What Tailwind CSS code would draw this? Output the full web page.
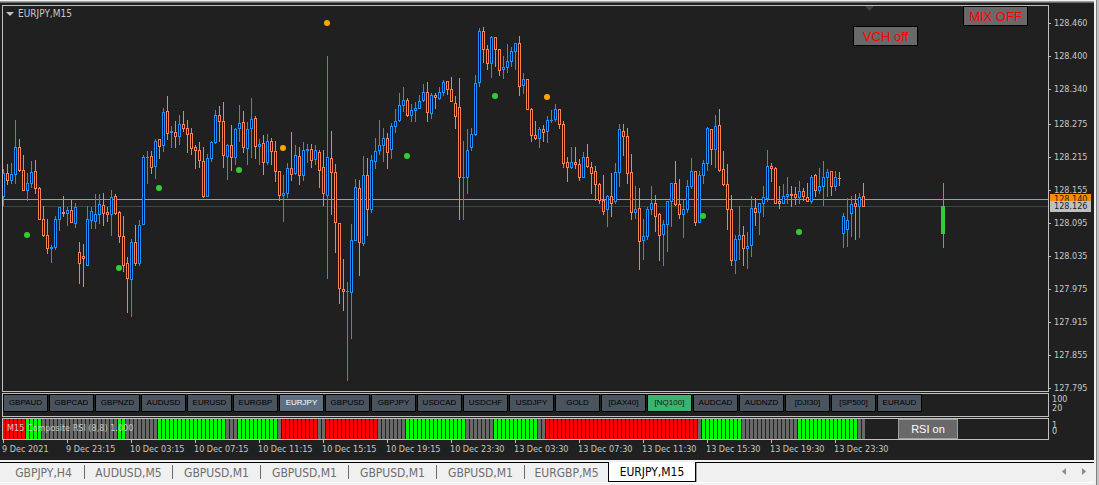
<!DOCTYPE html>
<html lang="en">
<head>
  <meta charset="UTF-8" />
  <meta name="viewport" content="width=device-width, initial-scale=1.0" />
  <title>EURJPY,M15</title>
  <script src="https://cdn.jsdelivr.net/npm/@tailwindcss/browser@4"></script>
</head>
<body class="bg-[#f0f0f0] font-['DejaVu_Sans_Condensed','DejaVu_Sans',sans-serif]">
  <div class="flex min-h-screen">
    <div class="flex-1 min-w-0 flex flex-col">
      <div class="h-px bg-[#f0f0f0]"></div>
      <div class="h-px bg-[#a0a0a0]"></div>
      <div class="h-px bg-[#696969]"></div>

      <main class="flex bg-[#202020] text-[#c8c8c8] text-[9px] pt-[2px] pl-[2px] pb-[5px] overflow-hidden">
        <div class="flex-1 min-w-0">
          <!-- price chart -->
          <section class="relative border border-[#c0c0c0] mb-px">
            <svg id="chart" class="block w-full h-[385px]" shape-rendering="crispEdges"></svg>
            <h1 class="absolute left-[3px] top-[2px] flex items-center gap-1 text-[10px] leading-3">
              <svg class="w-2 h-1" viewBox="0 0 8 4"><path d="M0 0h8L4 4z" fill="#c0c0c0"/></svg>
              EURJPY,M15
            </h1>
            <button class="absolute right-[130px] top-5 w-[65px] h-5 border border-black rounded-[1px] bg-[#696969] text-[#ff0000] text-[13px] leading-none font-['Liberation_Sans',sans-serif]">VCH off</button>
            <button class="absolute right-5 top-0 w-[65px] h-5 border border-black rounded-[1px] bg-[#696969] text-[#ff0000] text-[13px] leading-none font-['Liberation_Sans',sans-serif]">MIX OFF</button>
          </section>

          <!-- symbol switcher -->
          <nav id="symbols" class="flex gap-px border border-[#c0c0c0] h-6 mb-px overflow-hidden font-['Liberation_Sans',sans-serif]"></nav>

          <!-- RSI strip -->
          <section class="relative border border-[#c0c0c0]">
            <svg id="rsi" class="block w-full h-5" shape-rendering="crispEdges"></svg>
            <p class="absolute left-1 top-[3px] leading-3">M15 Composite RSI (8,8) 1.000</p>
            <button class="absolute right-[90px] top-0 w-[60px] h-5 border border-[#a0a0a0] bg-[#696969] text-white text-[11px] leading-none font-['Liberation_Sans',sans-serif]">RSI on</button>
          </section>

          <ol id="times" class="flex leading-3 overflow-hidden whitespace-nowrap"></ol>
        </div>

        <aside class="relative w-[45px] shrink-0 pt-[13px]">
          <ol id="prices" class="flex flex-col gap-[22px] leading-[11px]"></ol>
          <p class="mt-px pl-[3px] leading-[9px]">100<br>20</p>
          <p class="mt-[9px] pl-[3px] leading-[6px]">1<br>0</p>
          <div class="absolute left-px top-[189px] w-[41px] pl-1 leading-[11px] bg-[#ff8c00] text-[#202020]">128.140</div>
          <div class="absolute left-px top-[196px] w-[41px] pl-1 leading-[11px] bg-[#c0c0c0] text-[#202020]">128.126</div>
        </aside>
      </main>

      <div class="h-[2px] bg-[#f0f0f0]"></div>
      <footer class="flex items-start h-5 border-t border-black text-[12px] leading-[18px] text-[#6d6d6d]">
        <div id="tabs" class="flex min-w-0"></div>
        <div class="ml-auto flex gap-4 mt-[5px] mr-2">
          <button aria-label="Scroll tabs left"><svg class="block w-1 h-[7px]" viewBox="0 0 4 7"><path d="M4 0v7L0 3.5z" fill="#8a8a8a"/></svg></button>
          <button aria-label="Scroll tabs right"><svg class="block w-1 h-[7px]" viewBox="0 0 4 7"><path d="M0 0v7l4-3.5z" fill="#8a8a8a"/></svg></button>
        </div>
      </footer>
      <div class="h-px bg-white"></div>
    </div>
    <div class="w-[5px] shrink-0 flex">
      <div class="w-[2px] bg-[#f0f0f0]"></div>
      <div class="w-px bg-[#808080]"></div>
      <div class="w-[2px] bg-[#c4c4c4]"></div>
    </div>
  </div>

  <script>
    // up, high, body top, body bottom, low
    const candles = [
      [1,169,173,197,206],[0,164,173,181,185],[1,163,174,181,184],[1,120,147,175,184],[0,139,147,171,172],[0,155,170,191,191],
      [1,173,183,191,201],[1,161,172,184,188],[0,160,171,189,194],[0,187,188,220,220],[0,206,219,236,237],[0,219,235,249,254],
      [1,245,247,249,263],[1,216,219,248,250],[1,207,207,220,231],[0,196,212,214,217],[1,207,210,214,226],[0,200,210,223,223],
      [1,203,207,224,228],[0,242,252,264,284],[0,244,256,259,287],[1,206,219,266,266],[1,207,211,221,229],[1,194,214,222,229],
      [1,194,204,215,224],[0,193,205,214,226],[0,207,212,215,222],[1,190,197,215,236],[0,194,196,214,215],[0,211,212,237,243],
      [0,216,236,266,272],[0,257,263,279,313],[1,239,242,280,317],[0,225,242,264,266],[1,220,225,264,266],[1,155,157,225,225],
      [1,151,157,158,184],[0,151,156,168,174],[1,139,141,167,179],[0,139,139,147,159],[1,108,112,146,152],[0,96,111,134,140],
      [1,126,131,133,148],[0,121,132,137,148],[1,115,124,137,145],[0,111,124,129,132],[0,120,128,135,153],[0,128,133,149,155],
      [0,145,147,151,169],[0,142,150,161,168],[0,147,161,197,198],[1,154,158,197,197],[1,141,142,159,162],[1,110,115,143,144],
      [0,106,115,122,142],[0,102,121,156,168],[1,144,145,157,180],[0,125,145,158,171],[1,128,129,158,165],[1,105,123,129,142],
      [0,111,122,148,153],[1,122,129,149,165],[1,98,119,129,158],[0,116,118,147,159],[1,139,144,147,165],[0,135,143,163,175],
      [1,134,141,163,165],[0,138,141,152,165],[0,141,151,172,182],[0,171,171,196,201],[1,175,193,196,222],[1,163,168,194,198],
      [0,132,168,175,181],[1,145,155,174,175],[0,147,156,176,185],[1,142,150,176,181],[1,144,149,151,163],[0,144,149,161,168],
      [1,145,150,160,165],[0,150,152,171,188],[0,150,167,194,206],[1,56,157,196,279],[0,131,158,173,215],[0,164,172,223,253],
      [0,223,223,289,304],[0,259,289,292,311],[1,282,291,292,381],[1,224,240,293,339],[1,179,187,241,241],[0,180,188,243,276],
      [1,156,175,244,246],[0,158,175,210,236],[1,155,160,210,213],[1,138,151,162,169],[1,120,145,151,155],[1,128,138,146,162],
      [0,133,138,153,169],[1,123,126,150,159],[1,109,121,127,133],[1,93,105,121,122],[1,87,100,106,112],[0,98,100,116,117],
      [1,104,110,116,122],[1,102,108,111,122],[1,95,101,109,109],[1,84,92,101,102],[0,82,92,113,122],[1,93,95,114,119],
      [0,93,95,98,109],[1,87,92,99,100],[1,80,82,93,96],[0,81,81,90,95],[0,77,89,102,102],[0,96,103,117,129],
      [0,78,107,178,220],[1,141,177,178,220],[1,129,150,178,194],[1,128,134,148,151],[1,75,83,135,136],[1,28,31,83,87],
      [0,27,31,50,63],[0,45,49,64,70],[1,36,37,64,78],[0,37,37,50,67],[0,49,49,71,76],[1,56,67,70,79],
      [1,44,61,68,73],[1,47,51,62,67],[1,43,43,52,70],[0,36,43,87,96],[1,73,79,86,94],[0,79,79,110,110],
      [0,108,109,136,142],[0,121,135,139,140],[1,127,129,139,148],[0,125,129,133,142],[1,116,120,132,143],[1,110,120,121,123],
      [1,104,109,120,122],[0,109,109,125,129],[0,121,124,164,168],[0,157,162,168,182],[1,147,162,168,169],[0,147,162,165,169],
      [0,159,164,178,181],[1,152,157,178,178],[0,144,157,167,168],[0,162,167,174,194],[0,166,171,185,201],[0,183,184,201,204],
      [0,175,200,212,215],[1,195,196,210,227],[0,173,196,204,217],[1,163,172,202,204],[1,124,129,173,187],[0,124,131,137,156],
      [0,128,136,174,184],[0,154,172,213,220],[1,186,209,213,219],[0,188,208,242,270],[1,219,236,241,260],[1,207,209,237,240],
      [1,186,203,210,215],[0,195,203,217,232],[0,213,214,236,261],[1,220,224,235,266],[1,201,201,225,252],[1,183,183,202,227],
      [0,161,183,205,206],[0,179,204,215,219],[1,200,209,215,238],[1,180,186,210,213],[1,158,171,187,189],[0,171,171,223,226],
      [1,171,175,223,223],[1,160,163,176,184],[1,127,128,164,171],[0,129,129,150,165],[1,115,126,150,168],[0,109,125,171,172],
      [0,151,169,185,186],[0,164,184,210,230],[0,195,209,261,266],[1,235,239,261,274],[1,206,235,240,260],[0,226,235,249,266],
      [1,232,246,249,269],[1,196,208,246,257],[0,198,208,213,226],[1,203,203,213,235],[1,186,197,204,217],[1,150,166,199,202],
      [0,163,166,169,182],[0,167,168,204,204],[0,186,201,204,209],[1,184,196,204,204],[1,177,194,197,204],[0,186,194,196,207],
      [0,187,194,198,205],[1,181,191,198,204],[0,188,191,197,201],[0,183,197,202,202],[1,175,177,202,204],[0,174,175,191,197],
      [1,168,186,191,194],[1,161,177,187,206],[1,169,172,178,197],[0,171,171,187,196],[1,171,177,187,191],[0,172,178,179,186],
      [1,213,216,234,248],[1,198,220,230,247],[1,196,204,214,237],[0,194,203,207,240],[1,193,197,207,238],[0,183,196,207,207]
    ];

    const signals = [
      [27,235,'#32cd32'],[119,268,'#32cd32'],[159,188,'#32cd32'],[239,170,'#32cd32'],[407,156,'#32cd32'],[495,96,'#32cd32'],
      [703,216,'#32cd32'],[799,232,'#32cd32'],[283,148,'#ffa500'],[327,23,'#ffa500'],[547,97,'#ffa500']
    ];

    const rect = (x, y, w, h, fill) => `<rect x="${x}" y="${y}" width="${w}" height="${h}" fill="${fill}"/>`;

    let chart = '';
    candles.forEach(([up, high, top, bottom, low], i) => {
      const color = up ? '#1e90ff' : '#ff7f50';
      const x = 2 + i * 4;
      chart += rect(x + 1, high, 1, low - high, color);
      chart += rect(x, top, 3, bottom - top, color);
      if (bottom - top > 2) chart += rect(x + 1, top + 1, 1, bottom - top - 2, '#000');
    });
    const levels = rect(3, 206, '100%', 1, '#3a4646') + rect(3, 199, '100%', 1, '#ff8c00');
    const dots = signals.map(([x, y, c]) =>
      `<circle cx="${x}" cy="${y}" r="3" fill="${c}" shape-rendering="auto"/>`).join('');
    const projection = rect(943, 183, 1, 65, '#32cd32') + rect(941, 206, 4, 28, '#32cd32');
    const shift = '<path d="M865 6h9l-4.500 5z" fill="#3a4646" shape-rendering="auto"/>';
    document.getElementById('chart').innerHTML =
      `<g transform="translate(-3 -6)">${levels}${chart}${dots}${projection}${shift}</g>`;

    // runs of bars: colour, count
    const runs = [
      ['r',6],['g',4],['n',19],['g',2],['n',8],['g',17],['n',3],['g',10],['n',1],['r',9],['n',2],['r',13],['n',7],
      ['g',15],['n',7],['g',11],['n',2],['r',38],['n',1],['g',10],['n',14],['g',15],['n',2]
    ];
    const colors = { r: '#ff0000', g: '#00ff00', n: '#696969' };
    let bars = '', bar = 0;
    for (const [kind, count] of runs) {
      for (let n = 0; n < count; n++, bar++) bars += rect(bar * 4 - 1, 0, 3, 20, colors[kind]);
    }
    document.getElementById('rsi').innerHTML = bars;

    const symbols = ['GBPAUD','GBPCAD','GBPNZD','AUDUSD','EURUSD','EURGBP','EURJPY','GBPUSD','GBPJPY','USDCAD',
      'USDCHF','USDJPY','GOLD','[DAX40]','[NQ100]','AUDCAD','AUDNZD','[DJI30]','[SP500]','EURAUD'];
    const symbolStyle = {
      EURJPY: 'bg-[#5f6f82] text-white',
      '[NQ100]': 'bg-[#3cb371] text-[#10200f]'
    };
    document.getElementById('symbols').innerHTML = symbols.map(s =>
      `<button class="w-[45px] h-[18px] shrink-0 border border-black rounded-[1px] text-[8px] leading-none ${symbolStyle[s] || 'bg-[#4a545f] text-black'}">${s}</button>`).join('');

    const times = ['9 Dec 2021','9 Dec 23:15','10 Dec 03:15','10 Dec 07:15','10 Dec 11:15','10 Dec 15:15','10 Dec 19:15',
      '10 Dec 23:30','13 Dec 03:30','13 Dec 07:30','13 Dec 11:30','13 Dec 15:30','13 Dec 19:30','13 Dec 23:30'];
    document.getElementById('times').innerHTML = times.map(t =>
      `<li class="w-16 shrink-0"><span class="block w-px h-[3px] ml-px bg-[#c0c0c0]"></span>${t}</li>`).join('');

    const prices = ['128.460','128.400','128.340','128.275','128.215','128.155','128.095','128.035','127.975','127.915','127.855','127.795'];
    document.getElementById('prices').innerHTML = prices.map((p, i) =>
      `<li class="flex items-center gap-[3px] ${i === 3 ? 'mt-[2px]' : ''}"><span class="w-[2px] h-px bg-[#c0c0c0]"></span>${p}</li>`).join('');

    const tabs = ['GBPJPY,H4','AUDUSD,M5','GBPUSD,M1','GBPUSD,M1','GBPUSD,M1','GBPUSD,M1','EURGBP,M5','EURJPY,M15'];
    document.getElementById('tabs').innerHTML = tabs.map((t, i) => {
      if (i === 7) return `<button class="w-[88px] h-5 -mt-px pt-px border border-t-0 border-black bg-white text-black shadow-[1px_1px_0_#a0a0a0]">${t}</button>`;
      const line = i < 6 ? '<span class="w-px h-[14px] mt-[2px] bg-[#6d6d6d]"></span>' : '';
      return `<button class="${i === 0 ? 'w-[84px] pl-[3px]' : i === 6 ? 'w-[83px]' : 'w-[87px]'} shrink-0">${t}</button>${line}`;
    }).join('');
  </script>
</body>
</html>
